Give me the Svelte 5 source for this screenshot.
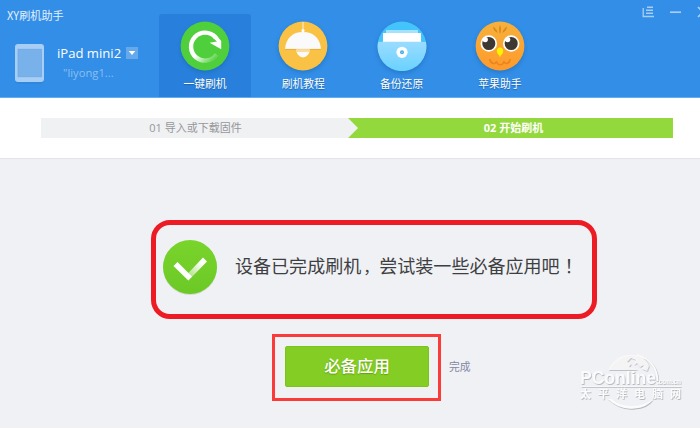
<script>
  const tabs = [
    { id: 'flash', label: '一键刷机' },
    { id: 'guide', label: '刷机教程' },
    { id: 'backup', label: '备份还原' },
    { id: 'apple', label: '苹果助手' }
  ];
  let active = $state('flash');
</script>

<div class="window">
  <header>
    <div class="side">
      <div class="title">XY刷机助手</div>
      <div class="device">
        <svg width="36" height="44" viewBox="0 0 36 44">
          <rect x="3" y="4" width="29" height="38" rx="3" fill="#2a7fce" opacity=".35" />
          <rect x="3" y="2" width="29" height="38" rx="3" fill="#a9cef5" />
          <rect x="6" y="7.2" width="23.4" height="27.6" fill="#79b2eb" stroke="#6aa7e5" stroke-width=".7" />
        </svg>
        <div class="info">
          <div class="name"><span>iPad mini2</span>
            <svg width="12" height="12" viewBox="0 0 12 12"><rect width="12" height="12" fill="#65a9ea" /><path d="M2.7 4h6.6L6 8z" fill="#fff" /></svg>
          </div>
          <div class="owner">"liyong1...</div>
        </div>
      </div>
    </div>
    <nav>
      {#each tabs as tab (tab.id)}
        <button class="tab" class:active={active === tab.id} onclick={() => (active = tab.id)}>
          <svg class="icon" width="50" height="50" viewBox="0 0 50 50">
            {#if tab.id === 'flash'}
              <defs>
                <linearGradient id="fade" gradientUnits="userSpaceOnUse" x1="23" y1="28" x2="33" y2="39">
                  <stop offset="0" stop-color="#fff" /><stop offset="1" stop-color="#fff" stop-opacity=".12" />
                </linearGradient>
              </defs>
              <circle cx="25" cy="25" r="24.4" fill="#4fcf3b" />
              <path d="M36.6 33.5A14 14 0 1 1 35.5 16.3" fill="none" stroke="url(#fade)" stroke-width="4.4" />
              <path d="M33 17L36.8 14.3Q39 17.5 41.2 20V28.2L29.6 21.8L37 20.5z" fill="#fff" />
            {:else if tab.id === 'guide'}
              <circle cx="25" cy="25" r="24.4" fill="#f9c244" />
              <path d="M25 1V10" stroke="#fbe4b4" stroke-width="1.4" />
              <circle cx="25" cy="9.6" r="1.6" fill="#fff" />
              <path d="M7 28C8 17 14.5 11 25 11S42 17 43 28z" fill="#fafafa" />
              <path d="M7 28.4H43" stroke="#e7a936" stroke-width=".8" />
              <path d="M18.3 28.4H31.7A6.7 8 0 0 1 18.3 28.4z" fill="#fafafa" />
              <path d="M18.3 28.8H31.7L31.3 31H18.7z" fill="#fbdc98" />
            {:else if tab.id === 'backup'}
              <defs>
                <linearGradient id="disk" x1="0" y1="0" x2="0" y2="1"><stop offset="0" stop-color="#9adcff" /><stop offset="1" stop-color="#69d2ff" /></linearGradient>
              </defs>
              <circle cx="25" cy="25" r="24.4" fill="#43c4fb" />
              <rect x="9" y="9" width="32" height="5" fill="#a5e2fe" />
              <rect x="6" y="12" width="38" height="10" fill="#fff" />
              <path d="M1.1 20.8Q3 21 5 20.8H45Q47 21 48.9 20.8A24.4 24.4 0 1 1 1.1 20.8z" fill="url(#disk)" />
              <circle cx="25" cy="31.3" r="5.6" fill="#fff" />
              <circle cx="25" cy="31.3" r="2" fill="#49aee3" />
              <circle cx="25" cy="31.3" r=".6" fill="#b8e4fa" />
            {:else}
              <defs>
                <linearGradient id="owl" x1="0" y1="0" x2="0" y2="1"><stop offset="0" stop-color="#f6b13b" /><stop offset="1" stop-color="#ff9a2c" /></linearGradient>
              </defs>
              <circle cx="25" cy="25" r="24.4" fill="url(#owl)" />
              <path d="M25 4Q27 8 25 13Q23 8 25 4zM18 5.5Q22 8 22.5 12Q18.5 10 18 5.5zM32 5.5Q28 8 27.5 12Q31.5 10 32 5.5z" fill="#d8881c" />
              <path d="M15 38C15 43 21 44 21.5 40C22 45 28.5 45 29 40C29.5 44 35 43 35 38" fill="none" stroke="#e8861f" stroke-width="1.6" />
              {#each [13.8, 36.2] as x}
                <circle cx={x} cy="22.5" r="7.4" fill="#3e3833" stroke="#fff" stroke-width="1.7" />
                <circle cx={x - 3.6} cy="18.6" r="2.7" fill="#fff" />
              {/each}
              <path d="M25 26.5C27 26.5 28.5 28.5 28.2 30.5C28 33 25.5 34 25 36.5C24.5 34 22 33 21.8 30.5C21.5 28.5 23 26.5 25 26.5z" fill="#fff100" />
            {/if}
          </svg>
          <span>{tab.label}</span>
        </button>
      {/each}
    </nav>
    <svg class="controls" width="58" height="26" viewBox="0 0 58 26">
      <g fill="none" stroke="#a9cef5" stroke-width="1.3">
        <path d="M1.2 8V16.5H12" /><path d="M5 7.2H11M4 10.2H11M4 13.3H11" stroke-width="1.4" />
        <path d="M28 12.2H39" stroke-width="1.7" />
        <path d="M56 7L66 17M66 7L56 17" stroke-width="1.6" />
      </g>
    </svg>
  </header>

  <section class="steps">
    <div class="step first">01 导入或下载固件</div>
    <div class="step second">02 开始刷机</div>
  </section>

  <main>
    <div class="notice">
      <svg width="60" height="60" viewBox="0 0 60 60">
        <defs>
          <linearGradient id="green" x1="0" y1="0" x2="0" y2="1"><stop offset="0" stop-color="#79d52b" /><stop offset="1" stop-color="#6cc826" /></linearGradient>
          <linearGradient id="tick" x1="0" y1="1" x2="1" y2="0"><stop offset=".1" stop-color="#fff" stop-opacity=".35" /><stop offset=".75" stop-color="#fff" /></linearGradient>
        </defs>
        <circle cx="30" cy="31" r="27" fill="#c5cfc2" opacity=".7" />
        <circle cx="30" cy="30" r="27" fill="url(#green)" />
        <path d="M25.5 39L43 20.5L47 24.500L28.500 43.500z" fill="url(#tick)" />
        <path d="M13.5 29L17.500 25L32 39.500L28.300 43.500z" fill="#fff" />
      </svg>
      <p>设备已完成刷机<span class="comma">，</span>尝试装一些必备应用吧<span class="bang">！</span></p>
    </div>
    <div class="actions">
      <div class="frame"><button class="primary">必备应用</button></div>
      <span class="done">完成</span>
    </div>
  </main>

  <svg class="watermark" width="110" height="64" viewBox="0 0 110 64">
    <defs><filter id="relief" x="-10%" y="-10%" width="120%" height="125%"><feDropShadow dx=".7" dy=".9" stdDeviation=".7" flood-color="#999da3" flood-opacity=".75" /></filter></defs>
    <g filter="url(#relief)" fill="#fbfbfc">
      <path d="M32 21C37 10 45 4.5 56 5C65 5 71 10 73 16L71 21L66 19L68 15L64 17L61 13L58 15L60 10L55 8L51 12L55 14L53 17L59 19L62 20H32z" opacity=".85" />
      <path d="M61 5Q81 11 81.5 31" fill="none" stroke="#fbfbfc" stroke-width="1.8" />
      <path d="M32 49Q43 60 58 58.5Q71 58 77 49Q67 56.5 56 56Q43 56 36 49z" />
      <text x="4" y="33.6" class="logo" textLength="76" lengthAdjust="spacingAndGlyphs">PConline</text>
      <text x="81" y="33.6" class="suffix" textLength="24" lengthAdjust="spacingAndGlyphs">.com.cn</text>
      <path d="M5 36H105V36.7H5z" />
      <text x="4" y="47.6" class="cn" textLength="101" lengthAdjust="spacing">太平洋电脑网</text>
    </g>
  </svg>
</div>

<style>
  :global(body) { margin: 0; overflow: hidden; }
  .window {
    position: relative; width: 700px; height: 428px; overflow: hidden;
    display: flex; flex-direction: column; background: #f0f1f4;
    font-family: "Noto Sans", "Noto Sans CJK SC", sans-serif; font-size: 10.8px;
  }
  header {
    height: 98px; box-sizing: border-box; display: flex; flex: none;
    background: #328ee6; border-bottom: 1px solid #63adef; color: #fff;
  }
  .side { width: 159px; flex: none; }
  .title { padding: 7px 0 0 7px; color: #e4f0fd; font: 11.1px/16px "Noto Sans CJK SC", sans-serif; white-space: nowrap; }
  .device { display: flex; margin: 19px 0 0 12px; }
  .info { margin-left: 9px; white-space: nowrap; }
  .name { display: flex; align-items: center; gap: 5px; height: 22px; font-family: "Open Sans", sans-serif; font-size: 13.1px; }
  .name span { width: 64px; }
  .owner { margin-left: 6px; line-height: 17px; color: #8bbff3; font-family: "Open Sans", sans-serif; font-size: 11.2px; }
  nav { display: flex; gap: 6.3px; padding-top: 14px; flex: 1; }
  .tab {
    width: 92px; height: 83px; padding: 7px 0 0; border: 0; border-radius: 3px 3px 0 0;
    background: transparent; color: #fff; display: flex; flex-direction: column; align-items: center;
    font: 10.8px/16px "Noto Sans CJK SC", sans-serif; text-shadow: 0 1px 1px #1d62a8;
  }
  .tab.active { background: #2880dc; }
  .tab span { margin-top: 4px; }
  .icon { flex: none; filter: drop-shadow(0 2px 2px rgba(20, 80, 150, .35)); }
  .controls { flex: none; }
  .steps {
    height: 61px; box-sizing: border-box; flex: none; display: flex; padding: 20px 27px 0 41px;
    background: #fff; border-bottom: 1px solid #e2e4e7;
  }
  .step { height: 20px; font-size: 11px; line-height: 20px; text-align: center; white-space: nowrap; font-family: "Open Sans", "Noto Sans CJK SC", sans-serif; }
  .first { width: 317px; box-sizing: border-box; padding-right: 8px; background: #f0f1f3; color: #969799; clip-path: polygon(0 0, 307px 0, 317px 50%, 307px 100%, 0 100%); }
  .second { width: 325px; box-sizing: border-box; padding-left: 6px; margin-left: -10px; background: #93d83c; color: #fff; font-weight: 700; clip-path: polygon(0 0, 100% 0, 100% 100%, 0 100%, 10px 50%); }
  main { flex: 1; padding: 61px 0 0 151px; }
  .notice {
    width: 446px; height: 99px; box-sizing: border-box; border: 5px solid #ed1c24; border-radius: 19px;
    display: flex; align-items: center; padding: 0 0 6px 4px;
  }
  .notice p { margin: 0 0 2px 15px; font: 18.04px/28px "Noto Sans CJK SC", sans-serif; color: #3e3f42; white-space: nowrap; }
  .comma { font-size: 16px; padding-left: 2px; }
  .bang { padding-left: 5px; }
  .actions { display: flex; align-items: center; margin: 15px 0 0 121px; }
  .frame { width: 169px; height: 67px; box-sizing: border-box; border: 3px solid #fb3a3a; padding: 9px 0 0 10px; }
  .primary {
    width: 144px; height: 41px; padding: 0 0 2px; border: 1px solid #7bc41d; border-radius: 2px; background: #83cd24;
    color: #fff; font: 500 16.4px/37px "Noto Sans CJK SC", sans-serif; text-shadow: 0 1px 1px #64a010; display: block;
  }
  .done { margin: 0 0 3px 8px; color: #8287a5; font-family: "Noto Sans CJK SC", sans-serif; }
  .watermark { position: absolute; left: 576px; top: 350px; }
  .logo { font: 700 18px "Liberation Sans", sans-serif; }
  .suffix { font: 700 7px "Liberation Sans", sans-serif; }
  .cn { font: 700 11px "Noto Sans CJK SC", sans-serif; }
</style>
